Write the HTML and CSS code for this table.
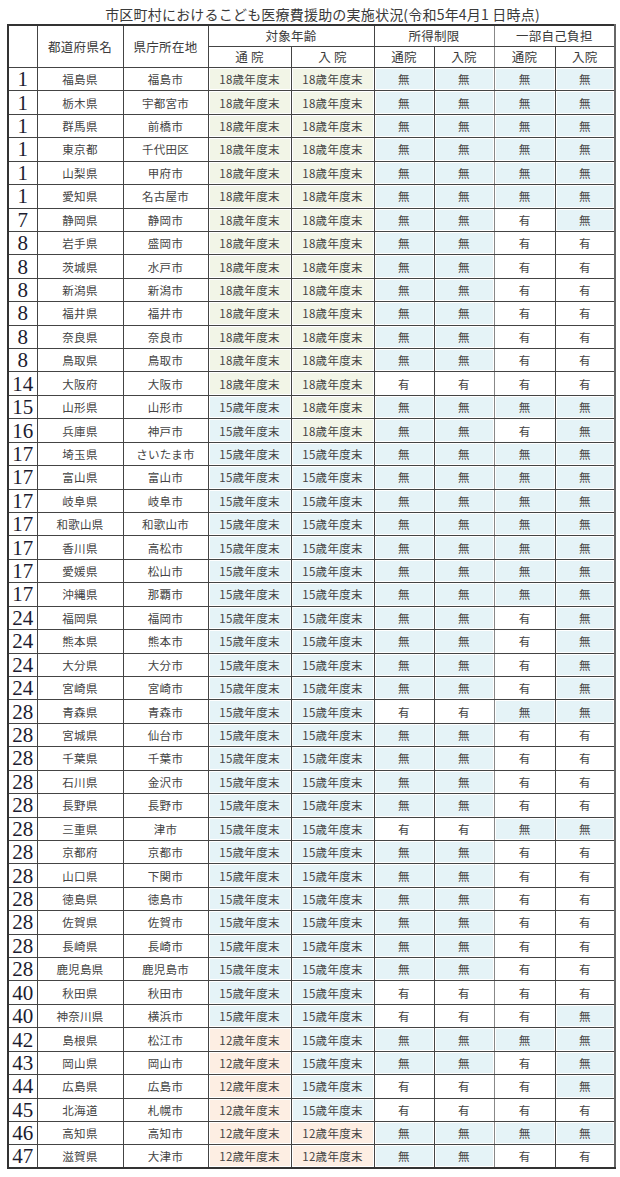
FILE: index.html
```html
<!DOCTYPE html>
<html lang="ja">
<head>
<meta charset="utf-8">
<title>市区町村におけるこども医療費援助の実施状況</title>
<link rel="stylesheet" href="styles.css">
</head>
<body>
<div class="page">
<h1 class="title">市区町村におけるこども医療費援助の実施状況(令和5年4月1 日時点)</h1>
<table class="tbl">
<colgroup>
<col class="c-rk"><col class="c-pref"><col class="c-city"><col class="c-age"><col class="c-age"><col class="c-yn"><col class="c-yn"><col class="c-yn3"><col class="c-yn">
</colgroup>
<thead>
<tr class="h1">
<th rowspan="2"></th><th rowspan="2">都道府県名</th><th rowspan="2">県庁所在地</th><th colspan="2">対象年齢</th><th colspan="2" class="sep">所得制限</th><th colspan="2">一部自己負担</th>
</tr>
<tr class="h2">
<th>通 院</th><th>入 院</th><th>通院</th><th class="sep">入院</th><th>通院</th><th>入院</th>
</tr>
</thead>
<tbody>
<tr><td class="rk">1</td><td>福島県</td><td>福島市</td><td class="a18">18歳年度末</td><td class="a18">18歳年度末</td><td class="no">無</td><td class="no sep">無</td><td class="no">無</td><td class="no">無</td></tr>
<tr><td class="rk">1</td><td>栃木県</td><td>宇都宮市</td><td class="a18">18歳年度末</td><td class="a18">18歳年度末</td><td class="no">無</td><td class="no sep">無</td><td class="no">無</td><td class="no">無</td></tr>
<tr><td class="rk">1</td><td>群馬県</td><td>前橋市</td><td class="a18">18歳年度末</td><td class="a18">18歳年度末</td><td class="no">無</td><td class="no sep">無</td><td class="no">無</td><td class="no">無</td></tr>
<tr><td class="rk">1</td><td>東京都</td><td>千代田区</td><td class="a18">18歳年度末</td><td class="a18">18歳年度末</td><td class="no">無</td><td class="no sep">無</td><td class="no">無</td><td class="no">無</td></tr>
<tr><td class="rk">1</td><td>山梨県</td><td>甲府市</td><td class="a18">18歳年度末</td><td class="a18">18歳年度末</td><td class="no">無</td><td class="no sep">無</td><td class="no">無</td><td class="no">無</td></tr>
<tr><td class="rk">1</td><td>愛知県</td><td>名古屋市</td><td class="a18">18歳年度末</td><td class="a18">18歳年度末</td><td class="no">無</td><td class="no sep">無</td><td class="no">無</td><td class="no">無</td></tr>
<tr><td class="rk">7</td><td>静岡県</td><td>静岡市</td><td class="a18">18歳年度末</td><td class="a18">18歳年度末</td><td class="no">無</td><td class="no sep">無</td><td class="yes">有</td><td class="no">無</td></tr>
<tr><td class="rk">8</td><td>岩手県</td><td>盛岡市</td><td class="a18">18歳年度末</td><td class="a18">18歳年度末</td><td class="no">無</td><td class="no sep">無</td><td class="yes">有</td><td class="yes">有</td></tr>
<tr><td class="rk">8</td><td>茨城県</td><td>水戸市</td><td class="a18">18歳年度末</td><td class="a18">18歳年度末</td><td class="no">無</td><td class="no sep">無</td><td class="yes">有</td><td class="yes">有</td></tr>
<tr><td class="rk">8</td><td>新潟県</td><td>新潟市</td><td class="a18">18歳年度末</td><td class="a18">18歳年度末</td><td class="no">無</td><td class="no sep">無</td><td class="yes">有</td><td class="yes">有</td></tr>
<tr><td class="rk">8</td><td>福井県</td><td>福井市</td><td class="a18">18歳年度末</td><td class="a18">18歳年度末</td><td class="no">無</td><td class="no sep">無</td><td class="yes">有</td><td class="yes">有</td></tr>
<tr><td class="rk">8</td><td>奈良県</td><td>奈良市</td><td class="a18">18歳年度末</td><td class="a18">18歳年度末</td><td class="no">無</td><td class="no sep">無</td><td class="yes">有</td><td class="yes">有</td></tr>
<tr><td class="rk">8</td><td>鳥取県</td><td>鳥取市</td><td class="a18">18歳年度末</td><td class="a18">18歳年度末</td><td class="no">無</td><td class="no sep">無</td><td class="yes">有</td><td class="yes">有</td></tr>
<tr><td class="rk">14</td><td>大阪府</td><td>大阪市</td><td class="a18">18歳年度末</td><td class="a18">18歳年度末</td><td class="yes">有</td><td class="yes sep">有</td><td class="yes">有</td><td class="yes">有</td></tr>
<tr><td class="rk">15</td><td>山形県</td><td>山形市</td><td class="a15">15歳年度末</td><td class="a18">18歳年度末</td><td class="no">無</td><td class="no sep">無</td><td class="no">無</td><td class="no">無</td></tr>
<tr><td class="rk">16</td><td>兵庫県</td><td>神戸市</td><td class="a15">15歳年度末</td><td class="a18">18歳年度末</td><td class="no">無</td><td class="no sep">無</td><td class="yes">有</td><td class="no">無</td></tr>
<tr><td class="rk">17</td><td>埼玉県</td><td>さいたま市</td><td class="a15">15歳年度末</td><td class="a15">15歳年度末</td><td class="no">無</td><td class="no sep">無</td><td class="no">無</td><td class="no">無</td></tr>
<tr><td class="rk">17</td><td>富山県</td><td>富山市</td><td class="a15">15歳年度末</td><td class="a15">15歳年度末</td><td class="no">無</td><td class="no sep">無</td><td class="no">無</td><td class="no">無</td></tr>
<tr><td class="rk">17</td><td>岐阜県</td><td>岐阜市</td><td class="a15">15歳年度末</td><td class="a15">15歳年度末</td><td class="no">無</td><td class="no sep">無</td><td class="no">無</td><td class="no">無</td></tr>
<tr><td class="rk">17</td><td>和歌山県</td><td>和歌山市</td><td class="a15">15歳年度末</td><td class="a15">15歳年度末</td><td class="no">無</td><td class="no sep">無</td><td class="no">無</td><td class="no">無</td></tr>
<tr><td class="rk">17</td><td>香川県</td><td>高松市</td><td class="a15">15歳年度末</td><td class="a15">15歳年度末</td><td class="no">無</td><td class="no sep">無</td><td class="no">無</td><td class="no">無</td></tr>
<tr><td class="rk">17</td><td>愛媛県</td><td>松山市</td><td class="a15">15歳年度末</td><td class="a15">15歳年度末</td><td class="no">無</td><td class="no sep">無</td><td class="no">無</td><td class="no">無</td></tr>
<tr><td class="rk">17</td><td>沖縄県</td><td>那覇市</td><td class="a15">15歳年度末</td><td class="a15">15歳年度末</td><td class="no">無</td><td class="no sep">無</td><td class="no">無</td><td class="no">無</td></tr>
<tr><td class="rk">24</td><td>福岡県</td><td>福岡市</td><td class="a15">15歳年度末</td><td class="a15">15歳年度末</td><td class="no">無</td><td class="no sep">無</td><td class="yes">有</td><td class="no">無</td></tr>
<tr><td class="rk">24</td><td>熊本県</td><td>熊本市</td><td class="a15">15歳年度末</td><td class="a15">15歳年度末</td><td class="no">無</td><td class="no sep">無</td><td class="yes">有</td><td class="no">無</td></tr>
<tr><td class="rk">24</td><td>大分県</td><td>大分市</td><td class="a15">15歳年度末</td><td class="a15">15歳年度末</td><td class="no">無</td><td class="no sep">無</td><td class="yes">有</td><td class="no">無</td></tr>
<tr><td class="rk">24</td><td>宮崎県</td><td>宮崎市</td><td class="a15">15歳年度末</td><td class="a15">15歳年度末</td><td class="no">無</td><td class="no sep">無</td><td class="yes">有</td><td class="no">無</td></tr>
<tr><td class="rk">28</td><td>青森県</td><td>青森市</td><td class="a15">15歳年度末</td><td class="a15">15歳年度末</td><td class="yes">有</td><td class="yes sep">有</td><td class="no">無</td><td class="no">無</td></tr>
<tr><td class="rk">28</td><td>宮城県</td><td>仙台市</td><td class="a15">15歳年度末</td><td class="a15">15歳年度末</td><td class="no">無</td><td class="no sep">無</td><td class="yes">有</td><td class="yes">有</td></tr>
<tr><td class="rk">28</td><td>千葉県</td><td>千葉市</td><td class="a15">15歳年度末</td><td class="a15">15歳年度末</td><td class="no">無</td><td class="no sep">無</td><td class="yes">有</td><td class="yes">有</td></tr>
<tr><td class="rk">28</td><td>石川県</td><td>金沢市</td><td class="a15">15歳年度末</td><td class="a15">15歳年度末</td><td class="no">無</td><td class="no sep">無</td><td class="yes">有</td><td class="yes">有</td></tr>
<tr><td class="rk">28</td><td>長野県</td><td>長野市</td><td class="a15">15歳年度末</td><td class="a15">15歳年度末</td><td class="no">無</td><td class="no sep">無</td><td class="yes">有</td><td class="yes">有</td></tr>
<tr><td class="rk">28</td><td>三重県</td><td>津市</td><td class="a15">15歳年度末</td><td class="a15">15歳年度末</td><td class="yes">有</td><td class="yes sep">有</td><td class="no">無</td><td class="no">無</td></tr>
<tr><td class="rk">28</td><td>京都府</td><td>京都市</td><td class="a15">15歳年度末</td><td class="a15">15歳年度末</td><td class="no">無</td><td class="no sep">無</td><td class="yes">有</td><td class="yes">有</td></tr>
<tr><td class="rk">28</td><td>山口県</td><td>下関市</td><td class="a15">15歳年度末</td><td class="a15">15歳年度末</td><td class="no">無</td><td class="no sep">無</td><td class="yes">有</td><td class="yes">有</td></tr>
<tr><td class="rk">28</td><td>徳島県</td><td>徳島市</td><td class="a15">15歳年度末</td><td class="a15">15歳年度末</td><td class="no">無</td><td class="no sep">無</td><td class="yes">有</td><td class="yes">有</td></tr>
<tr><td class="rk">28</td><td>佐賀県</td><td>佐賀市</td><td class="a15">15歳年度末</td><td class="a15">15歳年度末</td><td class="no">無</td><td class="no sep">無</td><td class="yes">有</td><td class="yes">有</td></tr>
<tr><td class="rk">28</td><td>長崎県</td><td>長崎市</td><td class="a15">15歳年度末</td><td class="a15">15歳年度末</td><td class="no">無</td><td class="no sep">無</td><td class="yes">有</td><td class="yes">有</td></tr>
<tr><td class="rk">28</td><td>鹿児島県</td><td>鹿児島市</td><td class="a15">15歳年度末</td><td class="a15">15歳年度末</td><td class="no">無</td><td class="no sep">無</td><td class="yes">有</td><td class="yes">有</td></tr>
<tr><td class="rk">40</td><td>秋田県</td><td>秋田市</td><td class="a15">15歳年度末</td><td class="a15">15歳年度末</td><td class="yes">有</td><td class="yes sep">有</td><td class="yes">有</td><td class="yes">有</td></tr>
<tr><td class="rk">40</td><td>神奈川県</td><td>横浜市</td><td class="a15">15歳年度末</td><td class="a15">15歳年度末</td><td class="yes">有</td><td class="yes sep">有</td><td class="yes">有</td><td class="no">無</td></tr>
<tr><td class="rk">42</td><td>島根県</td><td>松江市</td><td class="a12">12歳年度末</td><td class="a15">15歳年度末</td><td class="no">無</td><td class="no sep">無</td><td class="no">無</td><td class="no">無</td></tr>
<tr><td class="rk">43</td><td>岡山県</td><td>岡山市</td><td class="a12">12歳年度末</td><td class="a15">15歳年度末</td><td class="no">無</td><td class="no sep">無</td><td class="yes">有</td><td class="no">無</td></tr>
<tr><td class="rk">44</td><td>広島県</td><td>広島市</td><td class="a12">12歳年度末</td><td class="a15">15歳年度末</td><td class="yes">有</td><td class="yes sep">有</td><td class="yes">有</td><td class="no">無</td></tr>
<tr><td class="rk">45</td><td>北海道</td><td>札幌市</td><td class="a12">12歳年度末</td><td class="a15">15歳年度末</td><td class="yes">有</td><td class="yes sep">有</td><td class="yes">有</td><td class="yes">有</td></tr>
<tr><td class="rk">46</td><td>高知県</td><td>高知市</td><td class="a12">12歳年度末</td><td class="a12">12歳年度末</td><td class="no">無</td><td class="no sep">無</td><td class="no">無</td><td class="no">無</td></tr>
<tr><td class="rk">47</td><td>滋賀県</td><td>大津市</td><td class="a12">12歳年度末</td><td class="a12">12歳年度末</td><td class="no">無</td><td class="no sep">無</td><td class="yes">有</td><td class="yes">有</td></tr>
</tbody>
</table>
</div>
</body>
</html>
```

FILE: styles.css
```css
html, body {
  margin: 0;
  padding: 0;
  background: #fff;
}

.page {
  width: 620px;
  padding: 0 0 0 7px;
  box-sizing: border-box;
  font-family: "Noto Sans CJK JP", "Noto Sans", sans-serif;
  color: #444;
}

.title {
  margin: 0;
  padding: 4px 0 0 24px;
  width: 607px;
  box-sizing: border-box;
  height: 24px;
  line-height: 20px;
  font-size: 14px;
  font-weight: normal;
  text-align: center;
  color: #3a3a3a;
  letter-spacing: 0.2px;
}

.tbl {
  border-collapse: collapse;
  table-layout: fixed;
  width: 607px;
  border-top: 2px solid #333;
  border-left: 2px solid #333;
  border-bottom: 2px solid #333;
  border-right: 2px solid #666;
}

.c-rk { width: 29px; }
.c-pref { width: 86px; }
.c-city { width: 85px; }
.c-age { width: 83px; }
.c-yn { width: 60px; }
.c-yn3 { width: 61px; }

.tbl th,
.tbl td {
  padding: 0;
  border: 1px solid #444;
  text-align: center;
  vertical-align: middle;
  font-size: 11.5px;
  letter-spacing: 0.3px;
  font-weight: normal;
  color: #444;
  white-space: nowrap;
  overflow: hidden;
}

.tbl th.sep,
.tbl td.sep {
  border-right: 1px solid #888;
}

.h1 th,
.h2 th {
  height: 20px;
  line-height: 18px;
  font-size: 12.5px;
  color: #3a3a3a;
}

.tbl tbody tr {
  height: 23.43px;
}

.tbl td.rk {
  font-family: "Liberation Serif", "Times New Roman", serif;
  font-size: 21px;
  line-height: 20px;
  letter-spacing: 0;
  color: #1c1c30;
  text-align: center;
}

.a18 {
  background: #f2f5e7;
  box-shadow: inset 0 0 0 1px #fff;
}

.a15 {
  background: #e5f3f7;
  box-shadow: inset 0 0 0 1px #fff;
}

.a12 {
  background: #fdeee3;
  box-shadow: inset 0 0 0 1px #fff;
}

.no {
  background: #e5f3f7;
  box-shadow: inset 0 0 0 1px #fff;
}

.yes {
  background: #fff;
}
```
